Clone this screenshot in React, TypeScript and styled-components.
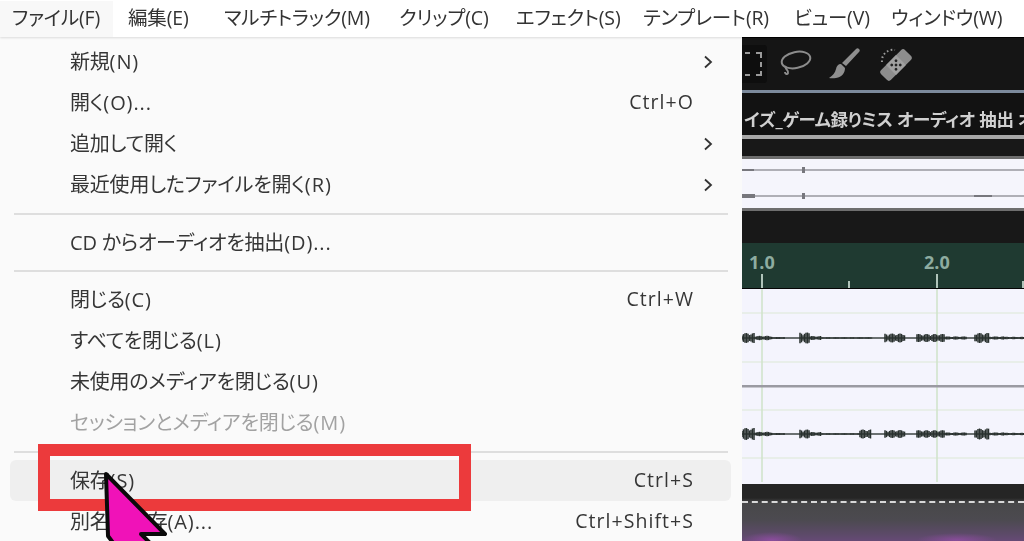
import React from "react";
import styled, { createGlobalStyle } from "styled-components";

const Global = createGlobalStyle`
  html, body { margin: 0; padding: 0; background: #fff; overflow: hidden; }
  body { font-family: "Open Sans", "Noto Sans CJK JP", sans-serif; font-feature-settings: "palt"; }
`;

const Page = styled.div`
  position: relative;
  width: 1024px;
  height: 541px;
  overflow: hidden;
  display: flex;
  flex-direction: column;
  background: #fff;
`;

const MenuBar = styled.nav`
  height: 37px;
  flex: none;
  display: flex;
  align-items: center;
  background: #fff;
  box-shadow: 0 1px 2px rgba(0, 0, 0, 0.12);
  z-index: 1;
`;

const BarItem = styled.div<{ $w: number; $active?: boolean }>`
  width: ${(p) => p.$w}px;
  height: 36px;
  flex: none;
  padding-left: ${(p) => (p.$active ? 12 : 0)}px;
  margin-right: ${(p) => (p.$active ? 15 : 0)}px;
  box-sizing: border-box;
  background: ${(p) => (p.$active ? "#f8f8f8" : "transparent")};
  color: #333;
  font-size: 19.5px;
  letter-spacing: -0.15px;
  line-height: 34px;
  white-space: nowrap;
  filter: blur(0.35px);
`;

const Body = styled.div`
  flex: 1;
  display: flex;
  min-height: 0;
`;

const Menu = styled.div`
  width: 742px;
  flex: none;
  box-sizing: border-box;
  padding: 4px 10px 0;
  background: #fafafa;
`;

const Row = styled.div<{ $hover?: boolean; $disabled?: boolean }>`
  height: 41px;
  display: flex;
  align-items: center;
  box-sizing: border-box;
  padding: 0 8px 2px 60px;
  width: 721px;
  border-radius: 6px;
  background: ${(p) => (p.$hover ? "#efefef" : "transparent")};
  color: ${(p) => (p.$disabled ? "#a2a2a2" : "#363636")};
  font-size: 20px;
  letter-spacing: -0.2px;
  white-space: nowrap;
`;

const Label = styled.span`
  flex: 1;
  filter: blur(0.35px);
`;

const Key = styled.span`
  font-size: 20px;
  letter-spacing: 0.9px;
`;

const Shortcut = styled.span`
  width: 200px;
  margin-right: 29px;
  text-align: right;
  font-size: 19.5px;
  letter-spacing: 1.05px;
  filter: blur(0.35px);
`;

const Chevron = styled.svg`
  width: 10px;
  height: 14px;
  margin: 2px 10px 0 0;
  flex: none;
`;

const Separator = styled.div<{ $h: number }>`
  height: ${(p) => p.$h}px;
  display: flex;
  align-items: center;
  margin: 0 4px;
  &::before {
    content: "";
    flex: 1;
    height: 2px;
    background: #dedede;
  }
`;

const Studio = styled.div`
  flex: 1;
  display: flex;
  flex-direction: column;
  overflow: hidden;
  background: #171717;
`;

const Toolbar = styled.div`
  height: 53px;
  flex: none;
  display: flex;
  align-items: center;
  background: #151515;
  border-top: 1px solid #000;
  box-sizing: border-box;
`;

const MarqueeBox = styled.div`
  width: 25px;
  height: 38px;
  display: flex;
  align-items: center;
  background: #0e0e0e;
  border-radius: 0 3px 3px 0;
  margin-right: 12px;
`;

const ToolIcon = styled.svg<{ $mr: number }>`
  flex: none;
  margin-right: ${(p) => p.$mr}px;
`;

const BlueLine = styled.div`
  height: 3px;
  flex: none;
  background: #7c8a9c;
`;

const TitleBar = styled.div`
  height: 42px;
  flex: none;
  box-sizing: border-box;
  padding-left: 2px;
  background: #121212;
  color: #d0d0d0;
  font-size: 17.5px;
  font-weight: 700;
  letter-spacing: -0.3px;
  line-height: 52px;
  white-space: nowrap;
  overflow: hidden;
`;

const TitleText = styled.span`
  filter: blur(0.35px);
  display: inline-block;
`;

const GreyBand = styled.div<{ $h: number; $c: string }>`
  height: ${(p) => p.$h}px;
  flex: none;
  background: ${(p) => p.$c};
`;

const DarkBand = styled.div<{ $h: number }>`
  height: ${(p) => p.$h}px;
  flex: none;
  background: #181818;
`;

const Drawing = styled.svg`
  display: block;
  flex: none;
`;

const Spectrogram = styled.div`
  flex: 1;
  position: relative;
  background:
    radial-gradient(ellipse 30px 8px at 30px 56px, rgba(170, 80, 190, 0.55), transparent),
    radial-gradient(ellipse 40px 7px at 215px 56px, rgba(170, 80, 190, 0.5), transparent),
    linear-gradient(180deg, #252525 0 14px, #484849 19px, #4c4a50 36px, #5c4a68 50px, #684a78 58px);
  &::before {
    content: "";
    position: absolute;
    left: 0;
    right: 0;
    top: 17px;
    border-top: 2px dashed #d8d8d8;
  }
`;

const Highlight = styled.div`
  position: absolute;
  left: 38px;
  top: 444px;
  width: 433px;
  height: 67px;
  box-sizing: border-box;
  border: 12px solid #ec3a3c;
  pointer-events: none;
`;

const Cursor = styled.svg`
  position: absolute;
  left: 95px;
  top: 468px;
`;

type Blob = [number, number, number];
const top: Blob[] = [
  [0, 13, 5], [13, 30, 2.2], [30, 43, 1], [58, 68, 5.5], [68, 80, 2], [80, 130, 0.8], [143, 163, 4.5], [175, 203, 4], [203, 225, 1.6], [233, 248, 5], [248, 262, 1.6], [262, 282, 1.2],
];
const bottom: Blob[] = [
  [0, 13, 6], [13, 30, 2.2], [30, 43, 1], [58, 68, 4.5], [68, 80, 2], [80, 118, 0.8], [118, 130, 4.5], [143, 163, 4], [175, 203, 3.8], [203, 225, 1.6], [233, 248, 5.5], [248, 262, 1.6], [262, 282, 1.2],
];

const Wave = ({ y, blobs }: { y: number; blobs: Blob[] }) => (
  <g>
    <line x1="0" x2="282" y1={y} y2={y} stroke="#3c4442" strokeWidth="1.3" />
    {blobs.flatMap(([a, b, h]) => {
      const bars = [];
      for (let x = a; x < b; x += 1.5) {
        const k = 0.5 + 0.5 * Math.abs(Math.sin(x * 1.7));
        bars.push(
          <line key={`${y}-${x}`} x1={x} x2={x} y1={y - h * k} y2={y + h * k} stroke="#28302e" strokeWidth="1.5" />
        );
      }
      return bars;
    })}
  </g>
);

const rows1 = [
  { t: "新規", k: "(N)", more: true },
  { t: "開く", k: "(O)...", s: "Ctrl+O" },
  { t: "追加して開く", more: true },
  { t: "最近使用したファイルを開く", k: "(R)", more: true },
];
const rows3 = [
  { t: "閉じる", k: "(C)", s: "Ctrl+W" },
  { t: "すべてを閉じる", k: "(L)" },
  { t: "未使用のメディアを閉じる", k: "(U)" },
  { t: "セッションとメディアを閉じる", k: "(M)", off: true },
];

type Item = { t: string; k?: string; s?: string; more?: boolean; off?: boolean; hover?: boolean };

const MenuRow = ({ t, k, s, more, off, hover }: Item) => (
  <Row $disabled={off} $hover={hover}>
    <Label>{t}{k && <Key>{k}</Key>}</Label>
    {s && <Shortcut>{s}</Shortcut>}
    {more && (
      <Chevron viewBox="0 0 10 14">
        <path d="M2 1.5 8 7 2 12.5" fill="none" stroke="#333" strokeWidth="1.8" />
      </Chevron>
    )}
  </Row>
);

export default function App() {
  return (
    <Page>
      <Global />
      <MenuBar>
        <BarItem $w={113} $active>ファイル(F)</BarItem>
        <BarItem $w={96}>編集(E)</BarItem>
        <BarItem $w={175}>マルチトラック(M)</BarItem>
        <BarItem $w={117}>クリップ(C)</BarItem>
        <BarItem $w={127}>エフェクト(S)</BarItem>
        <BarItem $w={151}>テンプレート(R)</BarItem>
        <BarItem $w={97}>ビュー(V)</BarItem>
        <BarItem $w={120}>ウィンドウ(W)</BarItem>
      </MenuBar>
      <Body>
        <Menu>
          {rows1.map((r) => <MenuRow key={r.t} {...r} />)}
          <Separator $h={17} />
          <MenuRow t="CD からオーディオを抽出" k="(D)..." />
          <Separator $h={16} />
          {rows3.map((r) => <MenuRow key={r.t} {...r} />)}
          <Separator $h={17} />
          <MenuRow t="保存" k="(S)" s="Ctrl+S" hover />
          <MenuRow t="別名で保存" k="(A)..." s="Ctrl+Shift+S" />
        </Menu>
        <Studio>
          <Toolbar>
            <MarqueeBox>
              <svg width="22" height="26" viewBox="0 0 22 26">
                <path d="M3 2h5M14 2h5v5M19 11v5M19 20v4h-5M8 24H3" fill="none" stroke="#9a9a9a" strokeWidth="2" />
              </svg>
            </MarqueeBox>
            <ToolIcon $mr={16} width="34" height="30" viewBox="0 0 34 30">
              <ellipse cx="17" cy="11" rx="14.5" ry="8" transform="rotate(-12 17 11)" fill="none" stroke="#8c8c8c" strokeWidth="2" />
              <path d="M7 17c-2 3 3 4 2 7-.5 2-3 1-3-1" fill="none" stroke="#8c8c8c" strokeWidth="2" />
            </ToolIcon>
            <ToolIcon $mr={18} width="32" height="32" viewBox="0 0 32 32">
              <path d="M30 1c1 1 1 2 0 3L17 18l-4-3L27 1c1-1 2-1 3 0Z" fill="#8f8f8f" />
              <path d="M12 16l4 4c0 5-3 9-9 10-2 .4-5 .5-7 0 4-3 6-5 7-9 .6-3 2-5 5-5Z" fill="#8f8f8f" />
            </ToolIcon>
            <ToolIcon $mr={0} width="34" height="34" viewBox="0 0 34 34">
              <path d="M3 15a11 11 0 0 1 13-12" fill="none" stroke="#9a9a9a" strokeWidth="2" strokeDasharray="1.6 2.4" />
              <g transform="rotate(-45 17 18)">
                <rect x="0" y="11" width="34" height="14" rx="3" fill="#8d8d8d" />
                <rect x="10" y="11" width="14" height="14" fill="#a0a0a0" />
                <g fill="#222">
                  <circle cx="14" cy="15" r="1.4" /><circle cx="20" cy="15" r="1.4" />
                  <circle cx="14" cy="21" r="1.4" /><circle cx="20" cy="21" r="1.4" />
                  <circle cx="17" cy="18" r="1.4" />
                </g>
              </g>
            </ToolIcon>
          </Toolbar>
          <BlueLine />
          <TitleBar><TitleText>イズ_ゲーム録りミス オーディオ 抽出 オ</TitleText></TitleBar>
          <GreyBand $h={4} $c="#a8a8a8" />
          <DarkBand $h={17} />
          <GreyBand $h={3} $c="#6e6e6e" />
          <Drawing width="282" height="49" viewBox="0 0 282 49">
            <rect width="282" height="49" fill="#f5f5fc" />
            <line x1="0" x2="282" y1="11" y2="11" stroke="#6a6a70" strokeWidth="1.2" />
            <line x1="0" x2="282" y1="37" y2="37" stroke="#6a6a70" strokeWidth="1.2" />
            <path d="M0 10h12v2H0zM60 8h3v6h-3zM0 35h13v4H0zM60 34h3v6h-3zM232 36h18v2h-18z" fill="#77777d" />
          </Drawing>
          <GreyBand $h={3} $c="#6e6e6e" />
          <DarkBand $h={32} />
          <Drawing width="282" height="46" viewBox="0 0 282 46">
            <rect width="282" height="46" fill="#1f3a31" />
            <rect y="45" width="282" height="1" fill="#050505" />
            <g fill="#8eaca0" fontFamily="'Open Sans', sans-serif" fontSize="18" fontWeight="700">
              <text x="7" y="26">1.0</text>
              <text x="182" y="26">2.0</text>
            </g>
            <g fill="#b0c4ba">
              <rect x="19" y="31" width="2" height="14" />
              <rect x="194" y="31" width="2" height="14" />
              <rect x="106" y="38" width="2" height="7" />
              <rect x="280" y="38" width="2" height="7" />
            </g>
          </Drawing>
          <Drawing width="282" height="195" viewBox="0 0 282 195">
            <rect width="282" height="195" fill="#f4f4fd" />
            <g stroke="#dbe8d6" strokeWidth="1.2">
              <line x1="0" x2="282" y1="24" y2="24" />
              <line x1="0" x2="282" y1="73" y2="73" />
              <line x1="0" x2="282" y1="121" y2="121" />
              <line x1="0" x2="282" y1="169" y2="169" />
              <line x1="20" x2="20" y1="0" y2="193" strokeWidth="1.5" stroke="#cfe3c9" />
              <line x1="195" x2="195" y1="0" y2="193" strokeWidth="1.5" stroke="#cfe3c9" />
            </g>
            <rect y="96" width="282" height="2.5" fill="#9a9aa2" />
            <Wave y={49} blobs={top} />
            <Wave y={145} blobs={bottom} />
          </Drawing>
          <Spectrogram />
        </Studio>
      </Body>
      <Highlight />
      <Cursor width="80" height="76" viewBox="0 0 80 76">
        <path d="M11 6 70 66H46l14 14H22L13 68Z" fill="#f012b8" stroke="#0a0a0a" strokeWidth="4" strokeLinejoin="round" />
      </Cursor>
    </Page>
  );
}
